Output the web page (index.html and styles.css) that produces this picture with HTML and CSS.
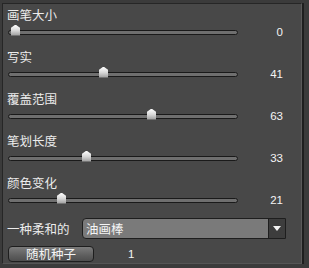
FILE: index.html
```html
<!DOCTYPE html>
<html>
<head>
<meta charset="utf-8">
<link rel="stylesheet" href="styles.css">
</head>
<body>
<div class="panel">
  <div class="row">
    <div class="label">画笔大小</div>
    <div class="slider-row">
      <div class="track"><div class="thumb" style="left:2px"></div></div>
      <div class="value">0</div>
    </div>
  </div>
  <div class="row">
    <div class="label">写实</div>
    <div class="slider-row">
      <div class="track"><div class="thumb" style="left:90px"></div></div>
      <div class="value">41</div>
    </div>
  </div>
  <div class="row">
    <div class="label">覆盖范围</div>
    <div class="slider-row">
      <div class="track"><div class="thumb" style="left:138px"></div></div>
      <div class="value">63</div>
    </div>
  </div>
  <div class="row">
    <div class="label">笔划长度</div>
    <div class="slider-row">
      <div class="track"><div class="thumb" style="left:73px"></div></div>
      <div class="value">33</div>
    </div>
  </div>
  <div class="row">
    <div class="label">颜色变化</div>
    <div class="slider-row">
      <div class="track"><div class="thumb" style="left:48px"></div></div>
      <div class="value">21</div>
    </div>
  </div>
  <div class="select-row">
    <div class="select-label">一种柔和的</div>
    <div class="select">
      <div class="select-text">油画棒</div>
      <div class="select-arrow"><span class="tri"></span></div>
    </div>
  </div>
  <div class="button-row">
    <div class="button">随机种子</div>
    <div class="seed">1</div>
  </div>
</div>
</body>
</html>
```

FILE: styles.css
```css
html, body {
  margin: 0;
  padding: 0;
  background: #3b3b3b;
  width: 309px;
  height: 268px;
  overflow: hidden;
}

.panel {
  box-sizing: border-box;
  margin: 3px 0 0 2px;
  width: 300px;
  height: 261px;
  background: #484848;
  border-top: 1px solid #262626;
  border-left: 1px solid #262626;
  border-right: 1px solid #5a5a5a;
  border-bottom: 1px solid #555555;
  box-shadow: 2px 0 0 #1f1f1f;
  padding: 3px 0 0 4px;
  font-family: "Noto Sans CJK SC", "Noto Sans", sans-serif;
  color: #ececec;
}

.row {
  height: 42px;
}

.label {
  font-size: 12.5px;
  line-height: 16px;
  height: 16px;
}

.slider-row {
  display: flex;
  align-items: center;
  height: 14px;
  margin-top: 2px;
  margin-left: 1px;
}

.track {
  position: relative;
  box-sizing: border-box;
  width: 230px;
  height: 5px;
  border: 1px solid #1a1a1a;
  border-radius: 3px;
  background: #6f6f6f;
}

.thumb {
  position: absolute;
  top: -6px;
  width: 9px;
  height: 11px;
  background: linear-gradient(#ffffff, #d8d8d8 50%, #9a9a9a);
  clip-path: polygon(50% 0, 100% 30%, 100% 100%, 0 100%, 0 30%);
}

.value {
  width: 45px;
  text-align: right;
  font-family: "Liberation Sans", Arial, sans-serif;
  font-size: 11.5px;
  line-height: 14px;
  color: #f4f4f4;
}

.select-row {
  display: flex;
  align-items: center;
  margin-top: 1px;
  height: 21px;
}

.select-label {
  width: 75px;
  font-size: 12.5px;
  line-height: 16px;
}

.select {
  box-sizing: border-box;
  display: flex;
  width: 204px;
  height: 21px;
  border: 1px solid #1e1e1e;
  border-radius: 4px 0 0 4px;
  background: #7a7a7a;
}

.select-text {
  flex: 1;
  padding-left: 3px;
  font-size: 12.5px;
  line-height: 19px;
  color: #f4f4f4;
}

.select-arrow {
  box-sizing: border-box;
  width: 17px;
  border-left: 1px solid #1e1e1e;
  background: #3d3d3d;
  display: flex;
  align-items: center;
  justify-content: center;
}

.tri {
  width: 0;
  height: 0;
  border-left: 4px solid transparent;
  border-right: 4px solid transparent;
  border-top: 5px solid #f4f4f4;
}

.button-row {
  display: flex;
  align-items: center;
  margin-top: 7px;
  height: 16px;
}

.button {
  box-sizing: border-box;
  margin-left: 1px;
  width: 86px;
  height: 16px;
  border: 1px solid #1e1e1e;
  border-radius: 4px;
  background: linear-gradient(#7c7c7c, #5e5e5e 60%, #4e4e4e);
  text-align: center;
  font-size: 12.5px;
  line-height: 14px;
  color: #f4f4f4;
}

.seed {
  margin-left: 34px;
  font-family: "Liberation Sans", Arial, sans-serif;
  font-size: 11.5px;
  line-height: 14px;
  color: #f4f4f4;
}
```
